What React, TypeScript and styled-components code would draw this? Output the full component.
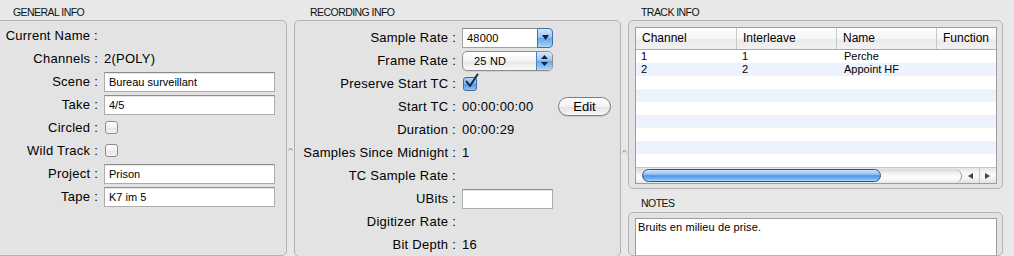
import React from "react";
import styled, { createGlobalStyle } from "styled-components";

const Global = createGlobalStyle`
  html, body { margin: 0; padding: 0; background: #e8e8e8; }
  body { font-family: "Liberation Sans", Arial, sans-serif; color: #0a0a0a; overflow: hidden; }
  #root { width: 1014px; height: 256px; overflow: hidden; }
`;

const Window = styled.div`
  display: flex;
  width: 1014px;
  height: 256px;
  overflow: hidden;
  background: #e8e8e8;
`;

const Column = styled.section<{ $w?: number }>`
  display: flex;
  flex-direction: column;
  ${(p) => (p.$w ? `width:${p.$w}px; flex:none;` : `flex:1; min-width:0; padding-right:11px;`)}
`;

const Title = styled.h2<{ $indent: number; $h?: number; $pt?: number }>`
  margin: 0;
  flex: none;
  box-sizing: border-box;
  height: ${(p) => p.$h ?? 20}px;
  padding: ${(p) => p.$pt ?? 6}px 0 0 ${(p) => p.$indent}px;
  font-size: 10.5px;
  font-weight: normal;
  line-height: 12px;
  letter-spacing: -0.55px;
  color: #111;
`;

const Box = styled.div<{ $bleed?: boolean; $h?: number }>`
  box-sizing: border-box;
  border: 1px solid #b3b3b3;
  border-radius: 5px;
  background: #e3e3e3;
  display: flex;
  flex-direction: column;
  ${(p) => (p.$bleed ? "margin-left:-4px;" : "")}
  ${(p) => (p.$h ? `height:${p.$h}px; flex:none;` : "flex:1;")}
`;

const Divider = styled.div<{ $top: number }>`
  width: 7px;
  flex: none;
  display: flex;
  justify-content: center;
  align-items: flex-start;
  padding-top: ${(p) => p.$top}px;
  box-sizing: border-box;
`;

const Form = styled.div<{ $label: number; $pt: number }>`
  display: grid;
  grid-template-columns: ${(p) => p.$label}px 1fr;
  grid-auto-rows: 23px;
  column-gap: 6px;
  align-items: center;
  padding-top: ${(p) => p.$pt}px;
`;

const Label = styled.div`
  text-align: right;
  white-space: nowrap;
  font-size: 13px;
  letter-spacing: 0.25px;
  color: #000;
`;

const Value = styled.div`
  display: flex;
  align-items: center;
  font-size: 13px;
  letter-spacing: 0.25px;
  white-space: nowrap;
  color: #000;
`;

const Field = styled.input<{ $w: number }>`
  box-sizing: border-box;
  width: ${(p) => p.$w}px;
  height: 20px;
  margin: 0;
  padding: 0 4px;
  border: 1px solid #acacac;
  border-top-color: #8c8c8c;
  background: #fff;
  font-family: "Liberation Sans", Arial, sans-serif;
  font-size: 11px;
  color: #000;
  outline: none;
  box-shadow: inset 0 1px 0 #e6e6e6;
`;

const Check = styled.span<{ $on?: boolean }>`
  position: relative;
  box-sizing: border-box;
  display: inline-block;
  width: ${(p) => (p.$on ? 14 : 13)}px;
  height: ${(p) => (p.$on ? 14 : 13)}px;
  margin-left: 1px;
  border-radius: 3px;
  border: 1px solid ${(p) => (p.$on ? "#3c6aa6" : "#8e8e8e")};
  background: ${(p) =>
    p.$on
      ? "linear-gradient(#b9d6f6, #7fb0e8 50%, #5b97dc 55%, #8fc3f4)"
      : "linear-gradient(#ffffff, #f1f1f1 50%, #e4e4e4 55%, #f6f6f6)"};
`;

const CheckMark = styled.svg`
  position: absolute;
  left: 0px;
  top: -5px;
  overflow: visible;
`;

const Combo = styled.div`
  display: flex;
  width: 91px;
  height: 20px;
  box-sizing: border-box;
`;

const ComboText = styled.div`
  flex: 1;
  box-sizing: border-box;
  border: 1px solid #a3a3a3;
  border-right: none;
  border-top-color: #8a8a8a;
  background: #fff;
  font-size: 11px;
  line-height: 18px;
  padding-left: 4px;
  letter-spacing: 0.2px;
`;

const AquaPart = styled.div<{ $rounded?: boolean }>`
  width: 16px;
  flex: none;
  box-sizing: border-box;
  display: flex;
  align-items: center;
  justify-content: center;
  border-left: 1px solid #4f7fbe;
  ${(p) =>
    p.$rounded
      ? ""
      : "border: 1px solid #3f6fae; border-radius: 0 4px 4px 0;"}
  background: linear-gradient(#d4e7fb, #9cc6f2 45%, #6ba6e8 52%, #8fc4f6 85%, #b8dcfb);
`;

const Popup = styled.div`
  display: flex;
  width: 91px;
  height: 20px;
  box-sizing: border-box;
  border: 1px solid #8d8d8d;
  border-radius: 5px;
  overflow: hidden;
  background: linear-gradient(#ffffff, #f4f4f4 50%, #e9e9e9 55%, #f8f8f8);
  box-shadow: 0 1px 0 rgba(0, 0, 0, 0.08);
`;

const PopupText = styled.div`
  flex: 1;
  font-size: 11px;
  line-height: 18px;
  padding-left: 11px;
  letter-spacing: 0.2px;
`;

const TCText = styled.span`
  width: 96px;
  flex: none;
`;

const PillButton = styled.button`
  box-sizing: border-box;
  width: 53px;
  height: 19px;
  margin: 0;
  padding: 0;
  border: 1px solid #7d7d7d;
  border-radius: 10px;
  background: linear-gradient(#ffffff, #f3f3f3 50%, #e4e4e4 55%, #f7f7f7);
  font-family: "Liberation Sans", Arial, sans-serif;
  font-size: 13px;
  color: #000;
  box-shadow: 0 1px 0 rgba(0, 0, 0, 0.1);
`;

const Table = styled.div`
  margin: 6px 5px 4px 6px;
  height: 157px;
  box-sizing: border-box;
  border: 1px solid #9d9d9d;
  background: #fff;
  display: flex;
  flex-direction: column;
  overflow: hidden;
`;

const cols = "101px 100px 100px 1fr";

const HeaderRow = styled.div`
  display: grid;
  grid-template-columns: ${cols};
  height: 22px;
  box-sizing: border-box;
  border-bottom: 1px solid #ababab;
  background: linear-gradient(#ffffff, #f6f6f6 50%, #ebebeb 55%, #f1f1f1);
  flex: none;
`;

const HeaderCell = styled.div<{ $last?: boolean }>`
  box-sizing: border-box;
  border-right: ${(p) => (p.$last ? "none" : "1px solid #c9c9c9")};
  font-size: 12px;
  line-height: 21px;
  padding-left: 6px;
  white-space: nowrap;
  overflow: hidden;
  color: #000;
`;

const Row = styled.div<{ $alt: boolean }>`
  display: grid;
  grid-template-columns: ${cols};
  height: 13px;
  flex: none;
  background: ${(p) => (p.$alt ? "#edf3fe" : "#ffffff")};
`;

const Cell = styled.div<{ $pad?: number }>`
  font-size: 11px;
  line-height: 13px;
  padding-left: ${(p) => p.$pad ?? 5}px;
  white-space: nowrap;
  overflow: hidden;
  color: #000;
`;

const HScroll = styled.div`
  display: flex;
  align-items: center;
  height: 16px;
  flex: none;
  box-sizing: border-box;
  border-top: 1px solid #c7c7c7;
  background: linear-gradient(#e6e6e6, #fafafa 40%, #f2f2f2 70%, #e2e2e2);
`;

const Track = styled.div`
  flex: 1;
  height: 14px;
  margin-left: 1px;
  box-sizing: border-box;
  border-radius: 0 7px 7px 0;
  border-right: 1px solid #9a9a9a;
  background: linear-gradient(#d8d8d8, #f4f4f4 35%, #ffffff 60%, #e9e9e9);
  display: flex;
  align-items: center;
  padding-left: 5px;
`;

const Knob = styled.div`
  width: 239px;
  height: 13px;
  box-sizing: border-box;
  border-radius: 7px;
  border: 1px solid #24589d;
  background: linear-gradient(#d2e6fc, #8fbff2 40%, #4e95e5 52%, #6fb2f4 80%, #a9dbff);
`;

const Arrows = styled.div`
  width: 34px;
  flex: none;
  display: flex;
  height: 100%;
`;

const ArrowBtn = styled.div<{ $sep?: boolean }>`
  flex: 1;
  display: flex;
  align-items: center;
  justify-content: center;
  ${(p) => (p.$sep ? "border-left: 1px solid #c6c6c6;" : "")}
`;

const Notes = styled.div`
  flex: 1;
  margin: 5px 5px 0 6px;
  border: 1px solid #9d9d9d;
  border-bottom: none;
  background: #fff;
  padding: 2px 2px;
  font-size: 11px;
  line-height: 13px;
  letter-spacing: 0.1px;
  color: #000;
`;

const Grip = () => (
  <svg width="5" height="4" viewBox="0 0 5 4">
    <path d="M0.5 3.5 L2.5 1 L4.5 3.5" fill="none" stroke="#8c8c8c" strokeWidth="1" />
  </svg>
);

const DownTri = () => (
  <svg width="7" height="5" viewBox="0 0 7 5">
    <path d="M0 0 H7 L3.5 5 Z" fill="#10233f" />
  </svg>
);

const UpDown = () => (
  <svg width="7" height="11" viewBox="0 0 7 11">
    <path d="M0 4 H7 L3.5 0 Z M0 7 H7 L3.5 11 Z" fill="#10233f" />
  </svg>
);

const Tri = ({ dir }: { dir: "l" | "r" }) => (
  <svg width="5" height="6" viewBox="0 0 5 6">
    <path d={dir === "l" ? "M5 0 V6 L0 3 Z" : "M0 0 V6 L5 3 Z"} fill="#444" />
  </svg>
);

const tracks = [
  ["1", "1", "Perche", ""],
  ["2", "2", "Appoint HF", ""],
];

export default function App() {
  const rows = Array.from({ length: 9 }, (_, i) => tracks[i] ?? ["", "", "", ""]);
  return (
    <>
      <Global />
      <Window>
        <Column $w={287}>
          <Title $indent={13}>GENERAL INFO</Title>
          <Box $bleed>
            <Form $label={101} $pt={3}>
              <Label>Current Name :</Label>
              <Value />
              <Label>Channels :</Label>
              <Value>2(POLY)</Value>
              <Label>Scene :</Label>
              <Value>
                <Field $w={171} value="Bureau surveillant" readOnly />
              </Value>
              <Label>Take :</Label>
              <Value>
                <Field $w={171} value="4/5" readOnly />
              </Value>
              <Label>Circled :</Label>
              <Value>
                <Check />
              </Value>
              <Label>Wild Track :</Label>
              <Value>
                <Check />
              </Value>
              <Label>Project :</Label>
              <Value>
                <Field $w={171} value="Prison" readOnly />
              </Value>
              <Label>Tape :</Label>
              <Value>
                <Field $w={171} value="K7 im 5" readOnly />
              </Value>
            </Form>
          </Box>
        </Column>
        <Divider $top={147}>
          <Grip />
        </Divider>
        <Column $w={327}>
          <Title $indent={16}>RECORDING INFO</Title>
          <Box>
            <Form $label={161} $pt={5}>
              <Label>Sample Rate :</Label>
              <Value>
                <Combo>
                  <ComboText>48000</ComboText>
                  <AquaPart>
                    <DownTri />
                  </AquaPart>
                </Combo>
              </Value>
              <Label>Frame Rate :</Label>
              <Value>
                <Popup>
                  <PopupText>25 ND</PopupText>
                  <AquaPart $rounded>
                    <UpDown />
                  </AquaPart>
                </Popup>
              </Value>
              <Label>Preserve Start TC :</Label>
              <Value>
                <Check $on>
                  <CheckMark width="16" height="16" viewBox="0 0 16 16">
                    <path d="M2.5 8.5 L6 13 L13.5 1.5" fill="none" stroke="#13284a" strokeWidth="2" strokeLinecap="round" strokeLinejoin="round" />
                  </CheckMark>
                </Check>
              </Value>
              <Label>Start TC :</Label>
              <Value>
                <TCText>00:00:00:00</TCText>
                <PillButton>Edit</PillButton>
              </Value>
              <Label>Duration :</Label>
              <Value>00:00:29</Value>
              <Label>Samples Since Midnight :</Label>
              <Value>1</Value>
              <Label>TC Sample Rate :</Label>
              <Value />
              <Label>UBits :</Label>
              <Value>
                <Field $w={91} value="" readOnly />
              </Value>
              <Label>Digitizer Rate :</Label>
              <Value />
              <Label>Bit Depth :</Label>
              <Value>16</Value>
            </Form>
          </Box>
        </Column>
        <Divider $top={149}>
          <Grip />
        </Divider>
        <Column>
          <Title $indent={13}>TRACK INFO</Title>
          <Box $h={169}>
            <Table>
              <HeaderRow>
                <HeaderCell>Channel</HeaderCell>
                <HeaderCell>Interleave</HeaderCell>
                <HeaderCell>Name</HeaderCell>
                <HeaderCell $last>Function</HeaderCell>
              </HeaderRow>
              {rows.map((r, i) => (
                <Row key={i} $alt={i % 2 === 1}>
                  <Cell>{r[0]}</Cell>
                  <Cell>{r[1]}</Cell>
                  <Cell $pad={7}>{r[2]}</Cell>
                  <Cell>{r[3]}</Cell>
                </Row>
              ))}
              <HScroll>
                <Track>
                  <Knob />
                </Track>
                <Arrows>
                  <ArrowBtn>
                    <Tri dir="l" />
                  </ArrowBtn>
                  <ArrowBtn $sep>
                    <Tri dir="r" />
                  </ArrowBtn>
                </Arrows>
              </HScroll>
            </Table>
          </Box>
          <Title $indent={13} $h={23} $pt={8}>NOTES</Title>
          <Box>
            <Notes>Bruits en milieu de prise.</Notes>
          </Box>
        </Column>
      </Window>
    </>
  );
}
